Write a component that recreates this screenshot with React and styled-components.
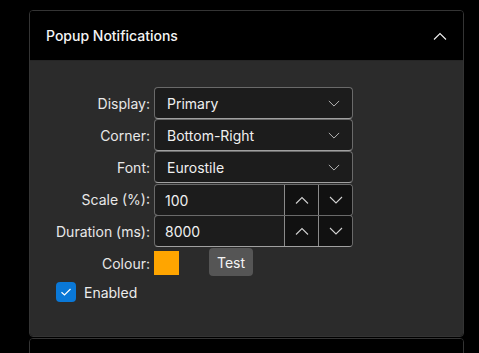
import React from "react";
import styled, { createGlobalStyle } from "styled-components";

const GlobalStyle = createGlobalStyle`
  html, body {
    margin: 0;
    background: #000;
    overflow: hidden;
  }
  body {
    font-family: "Inter", "Noto Sans", sans-serif;
    color: #f2f2f2;
  }
`;

const Page = styled.div`
  padding: 10px 15px 0 29px;
  display: flex;
  flex-direction: column;
  gap: 1px;
`;

const Panel = styled.section`
  width: 435px;
  box-sizing: border-box;
  border: 1px solid #343434;
  border-radius: 4px;
  overflow: hidden;
  background: #000;
`;

const Header = styled.div`
  height: 49px;
  display: flex;
  align-items: center;
  justify-content: space-between;
  padding: 0 16px 0 16px;
  background: #000;
  font-size: 14px;
  font-weight: 500;
  color: #f4f4f4;
`;

const Body = styled.div`
  background: #2b2b2b;
  border-top: 1px solid #262626;
  padding: 26px 0 34px 26px;
`;

const Form = styled.div`
  display: grid;
  grid-template-columns: 94px 199px;
  column-gap: 4px;
  grid-auto-rows: 32px;
`;

const Label = styled.div`
  display: flex;
  align-items: center;
  justify-content: flex-end;
  font-size: 14px;
  color: #e8e8e8;
`;

const Field = styled.div`
  box-sizing: border-box;
  display: flex;
  align-items: stretch;
  height: 32px;
  border: 1px solid #6a6a6a;
  border-bottom-color: #a0a0a0;
  border-radius: 4px;
  background: #1c1c1c;
  overflow: hidden;
  margin-top: ${(p) => (p.$gap ? "1px" : "0")};
`;

const Value = styled.div`
  flex: 1;
  display: flex;
  align-items: center;
  padding-left: ${(p) => (p.$num ? "10px" : "12px")};
  font-size: 14px;
  color: #f0f0f0;
`;

const Caret = styled.div`
  width: 24px;
  display: flex;
  align-items: center;
  justify-content: center;
  padding-right: 6px;
`;

const SpinButton = styled.div`
  width: 33px;
  display: flex;
  align-items: center;
  justify-content: center;
  background: #111;
  border-left: 1px solid #8a8a8a;
`;

const ColourRow = styled.div`
  display: flex;
  align-items: center;
  gap: 30px;
  height: 30px;
`;

const Swatch = styled.div`
  width: 25px;
  height: 24px;
  background: ${(p) => p.$color};
  margin-top: 2px;
`;

const TestButton = styled.button`
  width: 44px;
  height: 28px;
  border: none;
  border-radius: 4px;
  background: #555555;
  color: #f4f4f4;
  font-family: inherit;
  font-size: 14px;
  padding: 0;
`;

const CheckRow = styled.label`
  display: flex;
  align-items: center;
  gap: 8px;
  margin-top: 3px;
  font-size: 14px;
  color: #ececec;
`;

const Box = styled.span`
  width: 20px;
  height: 20px;
  border-radius: 4px;
  background: #0a78d7;
  display: flex;
  align-items: center;
  justify-content: center;
`;

const Chevron = ({ up, color = "#d0d0d0", w = 12 }) => (
  <svg width={w} height={w / 2 + 1} viewBox="0 0 14 8" fill="none">
    <path
      d={up ? "M1 7.5 L7 1.5 L13 7.5" : "M1 1 L7 7 L13 1"}
      stroke={color}
      strokeWidth="1.1"
    />
  </svg>
);

const Select = ({ value, gap }) => (
  <Field $gap={gap}>
    <Value>{value}</Value>
    <Caret>
      <Chevron color="#bdbdbd" />
    </Caret>
  </Field>
);

const Spinner = ({ value, gap }) => (
  <Field $gap={gap}>
    <Value $num>{value}</Value>
    <SpinButton>
      <Chevron up w={14} />
    </SpinButton>
    <SpinButton>
      <Chevron w={14} />
    </SpinButton>
  </Field>
);

export default function App() {
  return (
    <>
      <GlobalStyle />
      <Page>
        <Panel>
          <Header>
            <span>Popup Notifications</span>
            <Chevron up w={14} color="#f0f0f0" />
          </Header>
          <Body>
            <Form>
              <Label>Display:</Label>
              <Select value="Primary" />
              <Label>Corner:</Label>
              <Select value="Bottom-Right" />
              <Label>Font:</Label>
              <Select value="Eurostile" />
              <Label>Scale (%):</Label>
              <Spinner value="100" gap />
              <Label>Duration (ms):</Label>
              <Spinner value="8000" />
              <Label>Colour:</Label>
              <ColourRow>
                <Swatch $color="#ffa500" />
                <TestButton>Test</TestButton>
              </ColourRow>
            </Form>
            <CheckRow>
              <Box>
                <svg width="12" height="10" viewBox="0 0 12 10" fill="none">
                  <path d="M1.5 5.2 L4.5 8 L10.5 2" stroke="#fff" strokeWidth="1.2" />
                </svg>
              </Box>
              Enabled
            </CheckRow>
          </Body>
        </Panel>
        <Panel>
          <Header />
        </Panel>
      </Page>
    </>
  );
}
